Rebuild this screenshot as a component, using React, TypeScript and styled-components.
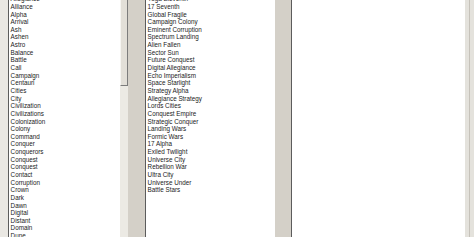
import styled, { createGlobalStyle } from 'styled-components';

const GlobalStyle = createGlobalStyle`
  html, body {
    margin: 0;
    padding: 0;
    background: #ffffff;
    overflow: hidden;
  }
`;

const words = [
  'Allegiance',
  'Alliance',
  'Alpha',
  'Arrival',
  'Ash',
  'Ashen',
  'Astro',
  'Balance',
  'Battle',
  'Call',
  'Campaign',
  'Centauri',
  'Cities',
  'City',
  'Civilization',
  'Civilizations',
  'Colonization',
  'Colony',
  'Command',
  'Conquer',
  'Conquerors',
  'Conquest',
  'Conquest',
  'Contact',
  'Corruption',
  'Crown',
  'Dark',
  'Dawn',
  'Digital',
  'Distant',
  'Domain',
  'Dune',
];

const names = [
  'Yoga Eleventh',
  '17 Seventh',
  'Global Fragile',
  'Campaign Colony',
  'Eminent Corruption',
  'Spectrum Landing',
  'Alien Fallen',
  'Sector Sun',
  'Future Conquest',
  'Digital Allegiance',
  'Echo Imperialism',
  'Space Starlight',
  'Strategy Alpha',
  'Allegiance Strategy',
  'Lords Cities',
  'Conquest Empire',
  'Strategic Conquer',
  'Landing Wars',
  'Formic Wars',
  '17 Alpha',
  'Exiled Twilight',
  'Universe City',
  'Rebellion War',
  'Ultra City',
  'Universe Under',
  'Battle Stars',
];

export default function App() {
  return (
    <>
      <GlobalStyle />
      <Window>
        <EdgePad />
        <ListBox $width={112}>
          <Items>
            {words.map((w, i) => (
              <Item key={i}>{w}</Item>
            ))}
          </Items>
        </ListBox>
        <ScrollBar>
          <Thumb />
        </ScrollBar>
        <Gap $width={17} />
        <ListBox $width={130}>
          <Items>
            {names.map((n, i) => (
              <Item key={i}>{n}</Item>
            ))}
          </Items>
        </ListBox>
        <Gap $width={16} />
        <ListBox $width={174} />
        <RightEdge>
          <EdgeLine />
        </RightEdge>
      </Window>
    </>
  );
}

const Window = styled.div`
  display: flex;
  width: 474px;
  height: 237px;
  overflow: hidden;
  background: #d4d0c8;
  font-family: 'Liberation Sans', Arial, sans-serif;
`;

const EdgePad = styled.div`
  flex: 0 0 8px;
  background: #eae8e3;
`;

const ListBox = styled.div<{ $width: number }>`
  flex: 0 0 ${({ $width }) => $width}px;
  box-sizing: border-box;
  height: 100%;
  background: #ffffff;
  border-left: 1px solid #5c5c5c;
  overflow: hidden;
`;

const Items = styled.ul`
  list-style: none;
  margin: -4.75px 0 0;
  padding: 0 0 0 1.6px;
`;

const Item = styled.li`
  height: 7.65px;
  line-height: 7.65px;
  font-size: 6.3px;
  color: #1a1a1a;
  white-space: nowrap;
`;

const ScrollBar = styled.div`
  flex: 0 0 8px;
  display: flex;
  flex-direction: column;
  background: #eceae4;
`;

const Thumb = styled.div`
  box-sizing: border-box;
  height: 86px;
  background: #e2dfd8;
  border-left: 1px solid #f6f5f2;
  border-right: 1px solid #7c7c7c;
  border-bottom: 1px solid #7c7c7c;
`;

const Gap = styled.div<{ $width: number }>`
  flex: 0 0 ${({ $width }) => $width}px;
  background: #d4d0c8;
`;

const RightEdge = styled.div`
  flex: 1;
  display: flex;
  justify-content: center;
  background: #e4e2dc;
`;

const EdgeLine = styled.div`
  width: 1px;
  background: #c6c2ba;
`;
